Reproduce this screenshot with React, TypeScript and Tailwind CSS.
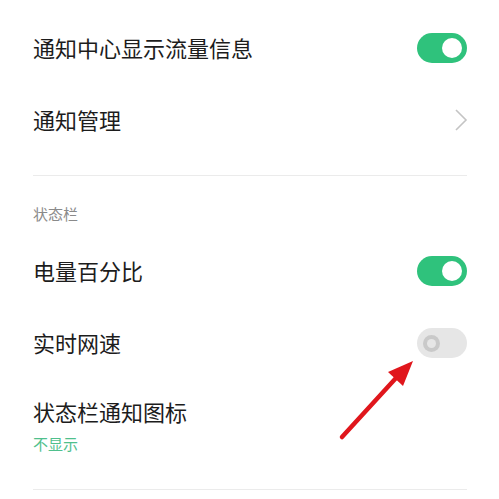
import React from 'react';

const font = { fontFamily: '"Noto Sans CJK SC", "Noto Sans", sans-serif' };

function Toggle({ on }: { on: boolean }) {
    if (on) {
        return (
            <div className="flex h-[30px] w-[50px] items-center justify-end rounded-full bg-[#2fc27c] pr-[5px]">
                <div className="h-[20px] w-[20px] rounded-full bg-white" />
            </div>
        );
    }
    return (
        <div className="flex h-[30px] w-[50px] items-center rounded-full bg-[#e6e6e6] pl-[6px]">
            <div className="flex h-[17px] w-[17px] items-center justify-center rounded-full bg-[#c9c9c9]">
                <div className="h-[9px] w-[9px] rounded-full bg-[#e6e6e6]" />
            </div>
        </div>
    );
}

function Chevron() {
    return (
        <svg width="14" height="24" viewBox="0 0 14 24" className="mr-[-1px]">
            <polyline points="2,2 12,12 2,22" fill="none" stroke="#c4c4c4" strokeWidth="1.6" />
        </svg>
    );
}

function Row({ title, right }: { title: string; right: React.ReactNode }) {
    return (
        <div className="flex h-[72px] items-center justify-between">
            <span className="mt-[-2px] text-[22px] leading-[30px] text-[#1c1c1c]">{title}</span>
            {right}
        </div>
    );
}

export default function App() {
    return (
        <div className="relative h-[499px] w-[499px] overflow-hidden bg-white" style={font}>
            <div className="flex flex-col pl-[33px] pr-[32px] pt-[12px]">
                <Row title="通知中心显示流量信息" right={<Toggle on />} />
                <Row title="通知管理" right={<Chevron />} />
                <div className="mt-[19px] h-px bg-[#ebebeb]" />
                <div className="mt-[28px] text-[15px] leading-[20px] text-[#8a8a8a]">状态栏</div>
                <div className="mt-[11px]">
                    <Row title="电量百分比" right={<Toggle on />} />
                    <Row title="实时网速" right={<Toggle on={false} />} />
                </div>
                <div className="flex flex-col pt-[17px]">
                    <span className="text-[22px] leading-[30px] text-[#1c1c1c]">状态栏通知图标</span>
                    <span className="mt-[8px] text-[15px] leading-[20px] text-[#4fc08d]">不显示</span>
                </div>
                <div className="mt-[35px] h-px bg-[#ebebeb]" />
            </div>
            <svg className="pointer-events-none absolute left-0 top-0" width="499" height="499" viewBox="0 0 499 499">
                <line x1="342" y1="437" x2="396" y2="378" stroke="#e0161c" strokeWidth="4.5" strokeLinecap="round" />
                <polygon points="413,361 388,372 403,386" fill="#e0161c" />
            </svg>
        </div>
    );
}
